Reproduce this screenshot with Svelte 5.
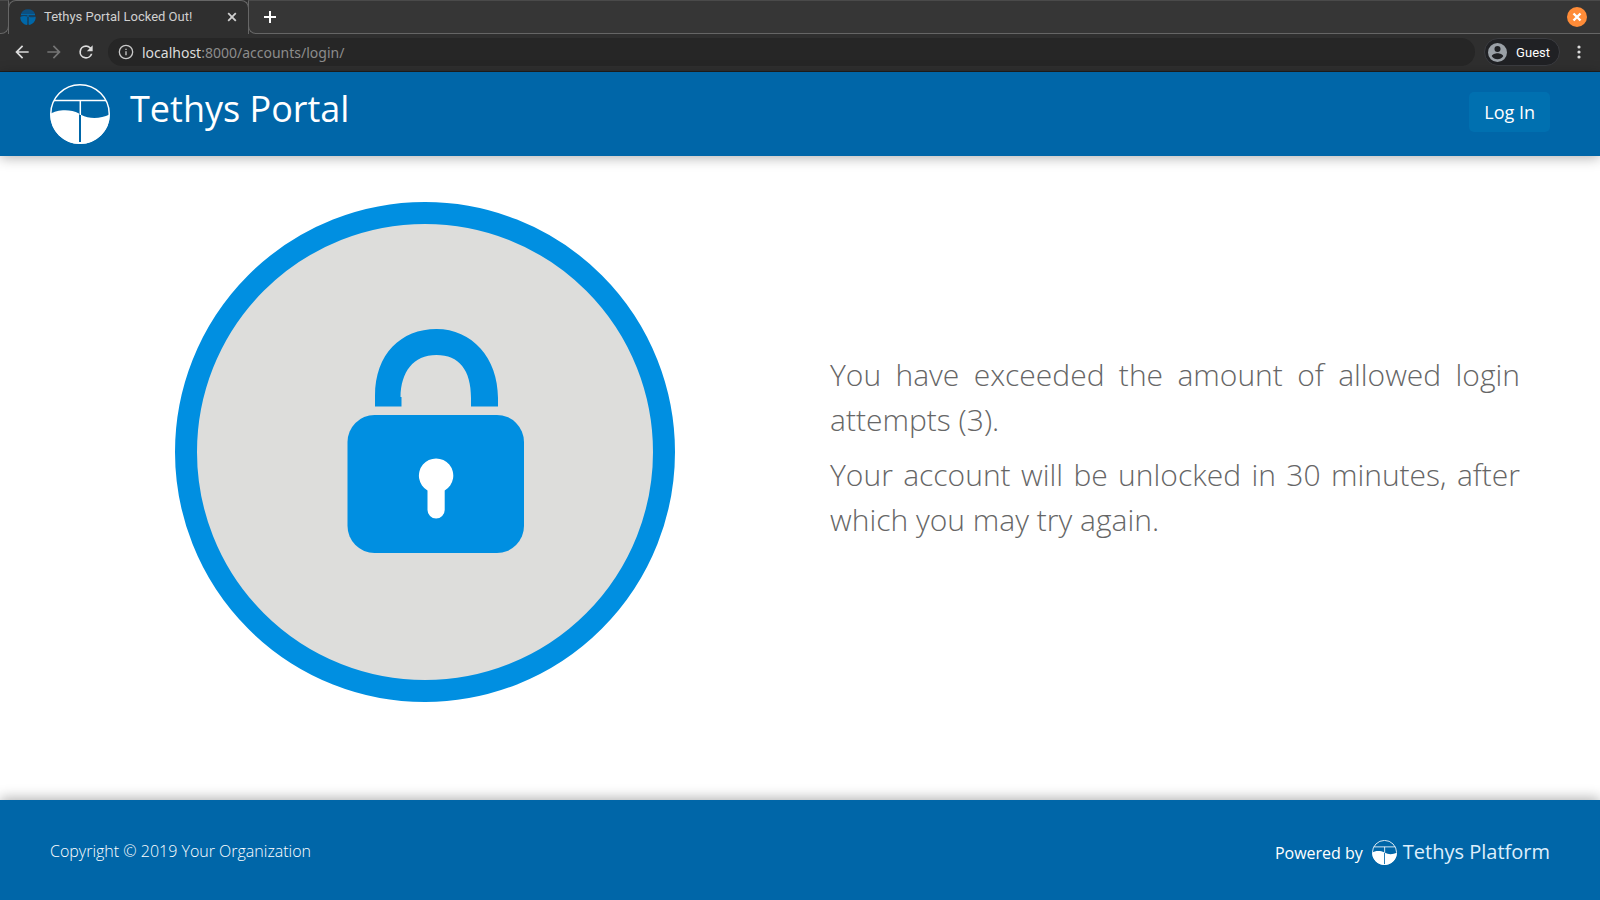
<script>
  let address = $state('localhost:8000/accounts/login/');
</script>

{#snippet mark(size, line)}
  <svg class="mark" width={size} height={size} viewBox="0 0 60 60" aria-hidden="true">
    <circle cx="30" cy="30" r={30 - line / 2} fill="none" stroke="currentColor" stroke-width={line} />
    <path d="M4 16.5H56M30.3 16.5V31" fill="none" stroke="currentColor" stroke-width={line} />
    <path
      d="M0.5 30C6 26 20 24.5 29 29.5V58H31V30.8C40 35.5 51 34.5 59.5 30.5C60 47 46 60 30 60C14 60 0 47 0.5 30Z"
      fill="currentColor"
    />
  </svg>
{/snippet}

<div class="window">
  <div class="tabs">
    <div class="lead"></div>
    <div class="tab">
      <svg class="favicon" width="16" height="16" viewBox="0 0 16 16" aria-hidden="true">
        <circle cx="8" cy="8" r="7.5" fill="#17405f" />
        <path d="M0.8 5.2A7.7 7.7 0 0 1 15.2 5.2Z" fill="#0c4f80" />
        <path d="M0.4 8C3 6.8 5 7 7.2 7.6V16C3 15.6 0 12 0.4 8ZM8.8 7.8C11 8.6 13 8.4 15.6 7.8C16 12 13 15.6 8.8 16Z" fill="#0067a8" />
        <path d="M1 5H15V6H8.600V8H7.400V6H1Z" fill="#0067a8" />
      </svg>
      <span class="tab-title">Tethys Portal Locked Out!</span>
      <button class="plain" aria-label="Close tab">
        <svg width="10" height="10" viewBox="0 0 10 10"><path d="M1.2 1.2 8.8 8.8M8.8 1.2 1.2 8.8" stroke="#d0d0d0" stroke-width="1.8" /></svg>
      </button>
    </div>
    <div class="strip">
      <button class="plain" aria-label="New tab">
        <svg width="12" height="12" viewBox="0 0 12 12"><path d="M6 0V12M0 6H12" stroke="#fff" stroke-width="2" /></svg>
      </button>
      <button class="plain" aria-label="Close window">
        <svg width="20" height="20" viewBox="0 0 20 20"><circle cx="10" cy="10" r="10" fill="#ff8c38" /><path d="M6.500 6.500 13.500 13.500M13.500 6.500 6.500 13.500" stroke="#fff" stroke-width="2.400" /></svg>
      </button>
    </div>
  </div>

  <div class="toolbar">
    <button class="plain" aria-label="Back">
      <svg width="20" height="20" viewBox="0 0 24 24" fill="#dcdcdc"><path d="M20 11H7.83l5.59-5.59L12 4l-8 8 8 8 1.41-1.41L7.83 13H20v-2z" /></svg>
    </button>
    <button class="plain" aria-label="Forward">
      <svg width="20" height="20" viewBox="0 0 24 24" fill="#757575"><path d="M12 4l-1.41 1.41L16.17 11H4v2h12.17l-5.58 5.59L12 20l8-8z" /></svg>
    </button>
    <button class="plain" aria-label="Reload">
      <svg width="20" height="20" viewBox="0 0 24 24" fill="#dcdcdc"><path d="M17.65 6.35A7.96 7.96 0 0 0 12 4a8 8 0 1 0 7.73 10h-2.08A6 6 0 1 1 12 6c1.66 0 3.14.69 4.22 1.78L13 11h7V4l-2.35 2.35z" /></svg>
    </button>
    <div class="omnibox">
      <svg width="16" height="16" viewBox="0 0 24 24" fill="#c8c8c8" aria-hidden="true"><path d="M11 7h2v2h-2zm0 4h2v6h-2zm1-10a11 11 0 1 0 0 22 11 11 0 0 0 0-22zm0 20a9 9 0 1 1 0-18 9 9 0 0 1 0 18z" /></svg>
      <button class="address" aria-label="Address: {address}"><span>{address.slice(0, 9)}</span>{address.slice(9)}</button>
    </div>
    <div class="side">
      <button class="guest">
        <svg width="19" height="19" viewBox="2 2 20 20" fill="#9aa0a6" aria-hidden="true"><path d="M12 2a10 10 0 1 0 0 20 10 10 0 0 0 0-20zm0 3.2a3.2 3.2 0 1 1 0 6.4 3.2 3.2 0 0 1 0-6.4zm0 14a7.2 7.2 0 0 1-6-3.2c.03-2 4-3.1 6-3.1s5.97 1.1 6 3.1a7.2 7.2 0 0 1-6 3.2z" /></svg>
        Guest
      </button>
      <button class="plain" aria-label="Menu">
        <svg width="4" height="14" viewBox="0 0 4 14" fill="#dcdcdc"><circle cx="2" cy="2" r="1.6" /><circle cx="2" cy="7" r="1.6" /><circle cx="2" cy="12" r="1.6" /></svg>
      </button>
    </div>
  </div>

  <header>
    <a class="brand" href="#home">
      {@render mark(60, 1.5)}
      <span>Tethys Portal</span>
    </a>
    <a class="login" href="#login">Log In</a>
  </header>

  <main>
    <div class="art">
      <svg viewBox="0 0 500 500" role="img" aria-label="Locked">
        <circle cx="250" cy="250" r="239" fill="#dddddb" stroke="#008fe1" stroke-width="22" />
        <path
          fill="#008fe1"
          d="M200 204.500V194C200 152 226 127 261.500 127S323 156 323 196V204.500H296V196C296 168 284 153 261.500 153C238 153 226 170 225.500 195H226.500V204.500Z"
        />
        <rect x="172.500" y="213" width="176.500" height="138" rx="27" fill="#008fe1" />
        <path fill="#fff" d="M252.500 288.500V308A8.600 8.600 0 0 0 269.700 308V288.500A17.200 17.200 0 1 0 252.500 288.500Z" />
      </svg>
    </div>
    <div class="message">
      <p>You have exceeded the amount of allowed login attempts (3).</p>
      <p>Your account will be unlocked in 30 minutes, after which you may try again.</p>
    </div>
  </main>

  <footer>
    <span class="copyright">Copyright © 2019 Your Organization</span>
    <div class="powered">
      <span>Powered by</span>
      <a href="#platform">{@render mark(25, 2)}<span>Tethys Platform</span></a>
    </div>
  </footer>
</div>

<style>
  :global(body) {
    margin: 0;
    background: #fff;
  }
  .window {
    min-height: 100vh;
    display: flex;
    flex-direction: column;
    font-family: 'Open Sans', 'Noto Sans', sans-serif;
  }
  svg {
    display: block;
    flex: none;
  }
  button {
    border: 0;
    padding: 0;
    background: none;
    font: inherit;
    color: inherit;
  }
  a {
    color: inherit;
    text-decoration: none;
  }
  .plain {
    flex: none;
  }
  .tabs,
  .toolbar {
    display: flex;
    box-sizing: border-box;
    font-family: Roboto, 'Open Sans', sans-serif;
    font-size: 13px;
    color: #d0d0d0;
  }
  .tabs {
    height: 34px;
    background: #2f2f2f;
  }
  .lead,
  .strip {
    box-sizing: border-box;
    background: #363636;
    border: 1px solid #666;
    border-top-color: #4a4a4a;
  }
  .lead {
    width: 9px;
    border-left: 0;
    border-radius: 0 0 8px 0;
  }
  .tab {
    width: 241px;
    box-sizing: border-box;
    margin: 0 -1px;
    padding: 0 11px 2px;
    border: solid #666;
    border-width: 1px 1px 0;
    border-radius: 8px 8px 0 0;
    background: #2f2f2f;
    display: flex;
    align-items: center;
    gap: 8px;
    z-index: 1;
  }
  .tab-title {
    flex: 1;
    white-space: nowrap;
  }
  .strip {
    flex: 1;
    border-right: 0;
    border-radius: 0 0 0 8px;
    padding: 0 13px 0 15px;
    display: flex;
    align-items: center;
    justify-content: space-between;
  }
  .toolbar {
    height: 38px;
    padding: 0 19px 1px 12px;
    border-bottom: 1px solid #1f1f1f;
    background: #2f2f2f;
    align-items: center;
    gap: 12px;
  }
  .omnibox {
    flex: 1;
    height: 28px;
    padding: 0 10px;
    border-radius: 14px;
    background: #262626;
    display: flex;
    align-items: center;
    gap: 8px;
    font-family: 'Noto Sans', 'Open Sans', sans-serif;
    font-size: 14px;
    color: #8c8c8c;
  }
  .address span {
    color: #dcdcdc;
  }
  .side {
    display: flex;
    align-items: center;
    gap: 17px;
    margin-left: -3px;
  }
  .guest {
    height: 28px;
    box-sizing: border-box;
    padding: 0 9px 0 3px;
    border: 1px solid #3b3c40;
    border-radius: 14px;
    background: #202124;
    color: #fff;
    display: flex;
    align-items: center;
    gap: 9px;
  }
  header,
  footer {
    position: relative;
    box-sizing: border-box;
    padding: 0 50px;
    background: #0066a8;
    color: #fff;
    display: flex;
    align-items: center;
    justify-content: space-between;
  }
  header {
    min-height: 84px;
    box-shadow: 0 2px 12px rgba(0, 0, 0, 0.3);
  }
  .brand {
    display: flex;
    gap: 20px;
    font-size: 36px;
    line-height: 50px;
  }
  .login {
    padding: 8px 15px;
    border-radius: 5px;
    background: #0070b0;
    font-size: 18px;
    line-height: 24px;
    margin-bottom: 4px;
  }
  main {
    flex: 1;
    padding: 46px 50px;
    display: grid;
    grid-template-columns: 1fr 1fr;
    align-items: center;
    align-content: start;
  }
  .art svg {
    width: 100%;
    max-width: 500px;
    margin: 0 auto;
  }
  .message {
    padding: 0 30px;
    font-size: 30px;
    font-weight: 300;
    line-height: 45px;
    color: #666;
    text-align: justify;
  }
  p {
    margin: 0 0 10px;
  }
  footer {
    min-height: 100px;
    padding-top: 2px;
    font-size: 16px;
    line-height: 24px;
    box-shadow: 0 -2px 12px rgba(0, 0, 0, 0.3);
  }
  .copyright {
    font-weight: 300;
  }
  .powered,
  .powered a {
    display: flex;
    align-items: baseline;
  }
  .powered {
    gap: 9px;
    padding-top: 2px;
  }
  .powered a {
    gap: 6px;
    font-size: 20px;
  }
  .powered a > span {
    color: #ddeefc;
  }
  .powered a :global(.mark) {
    align-self: center;
  }
</style>
